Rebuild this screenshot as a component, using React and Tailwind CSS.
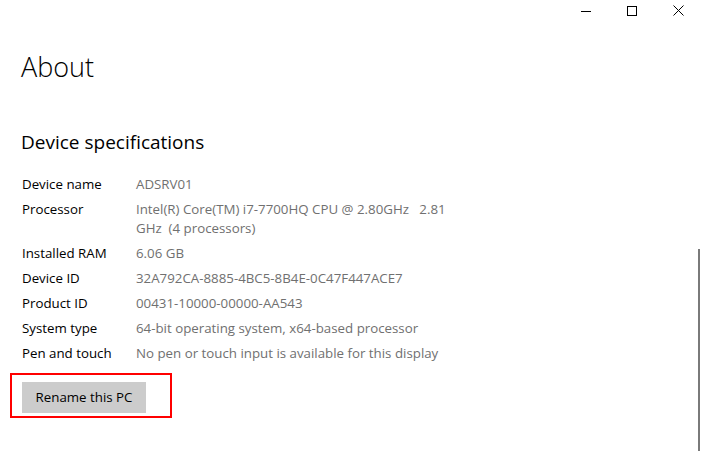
import React from 'react';

const specs = [
  ['Device name', 'ADSRV01'],
  ['Processor', 'Intel(R) Core(TM) i7-7700HQ CPU @ 2.80GHz   2.81\nGHz  (4 processors)'],
  ['Installed RAM', '6.06 GB'],
  ['Device ID', '32A792CA-8885-4BC5-8B4E-0C47F447ACE7'],
  ['Product ID', '00431-10000-00000-AA543'],
  ['System type', '64-bit operating system, x64-based processor'],
  ['Pen and touch', 'No pen or touch input is available for this display'],
];

function CaptionButtons() {
  return (
    <div className="flex justify-end">
      <button className="w-[46px] h-[21px] flex items-center justify-center">
        <svg width="10" height="10" viewBox="0 0 10 10" fill="none" stroke="#000" strokeWidth="1">
          <path d="M0 5.5h10" />
        </svg>
      </button>
      <button className="w-[46px] h-[21px] flex items-center justify-center">
        <svg width="10" height="10" viewBox="0 0 10 10" fill="none" stroke="#000" strokeWidth="1">
          <rect x="0.5" y="0.5" width="9" height="9" />
        </svg>
      </button>
      <button className="w-[46px] h-[21px] flex items-center justify-center">
        <svg width="11" height="11" viewBox="0 0 11 11" fill="none" stroke="#000" strokeWidth="1">
          <path d="M0.5 0.5l10 10M10.5 0.5l-10 10" />
        </svg>
      </button>
    </div>
  );
}

export default function App() {
  return (
    <div className="relative w-[701px] h-[451px] overflow-hidden bg-white font-['Open_Sans',sans-serif] text-black">
      <CaptionButtons />

      <div className="pl-[21px]">
        <h1 className="mt-[28px] text-[27px] leading-[36px] font-light">About</h1>

        <h2 className="mt-[43px] text-[19px] leading-[28px] font-normal">Device specifications</h2>

        <div className="mt-[19px] grid grid-cols-[115px_1fr] gap-y-[6px] text-[13.3px] leading-[19px]">
          {specs.map(([label, value]) => (
            <React.Fragment key={label}>
              <div className="pl-px">{label}</div>
              <div className="whitespace-pre-wrap text-[#707070]">{value}</div>
            </React.Fragment>
          ))}
        </div>

        <div className="relative mt-[19px] ml-px w-[124px]">
          <button className="w-[124px] h-[31px] bg-[#cccccc] text-[13.3px] text-black">
            Rename this PC
          </button>
          <span className="pointer-events-none absolute -left-[12px] -top-[9px] w-[162px] h-[45px] border-2 border-[#ff0000]" />
        </div>
      </div>

      <div className="absolute right-px top-[249px] bottom-0 w-[2px] bg-[#7a7a7a]" />
    </div>
  );
}
